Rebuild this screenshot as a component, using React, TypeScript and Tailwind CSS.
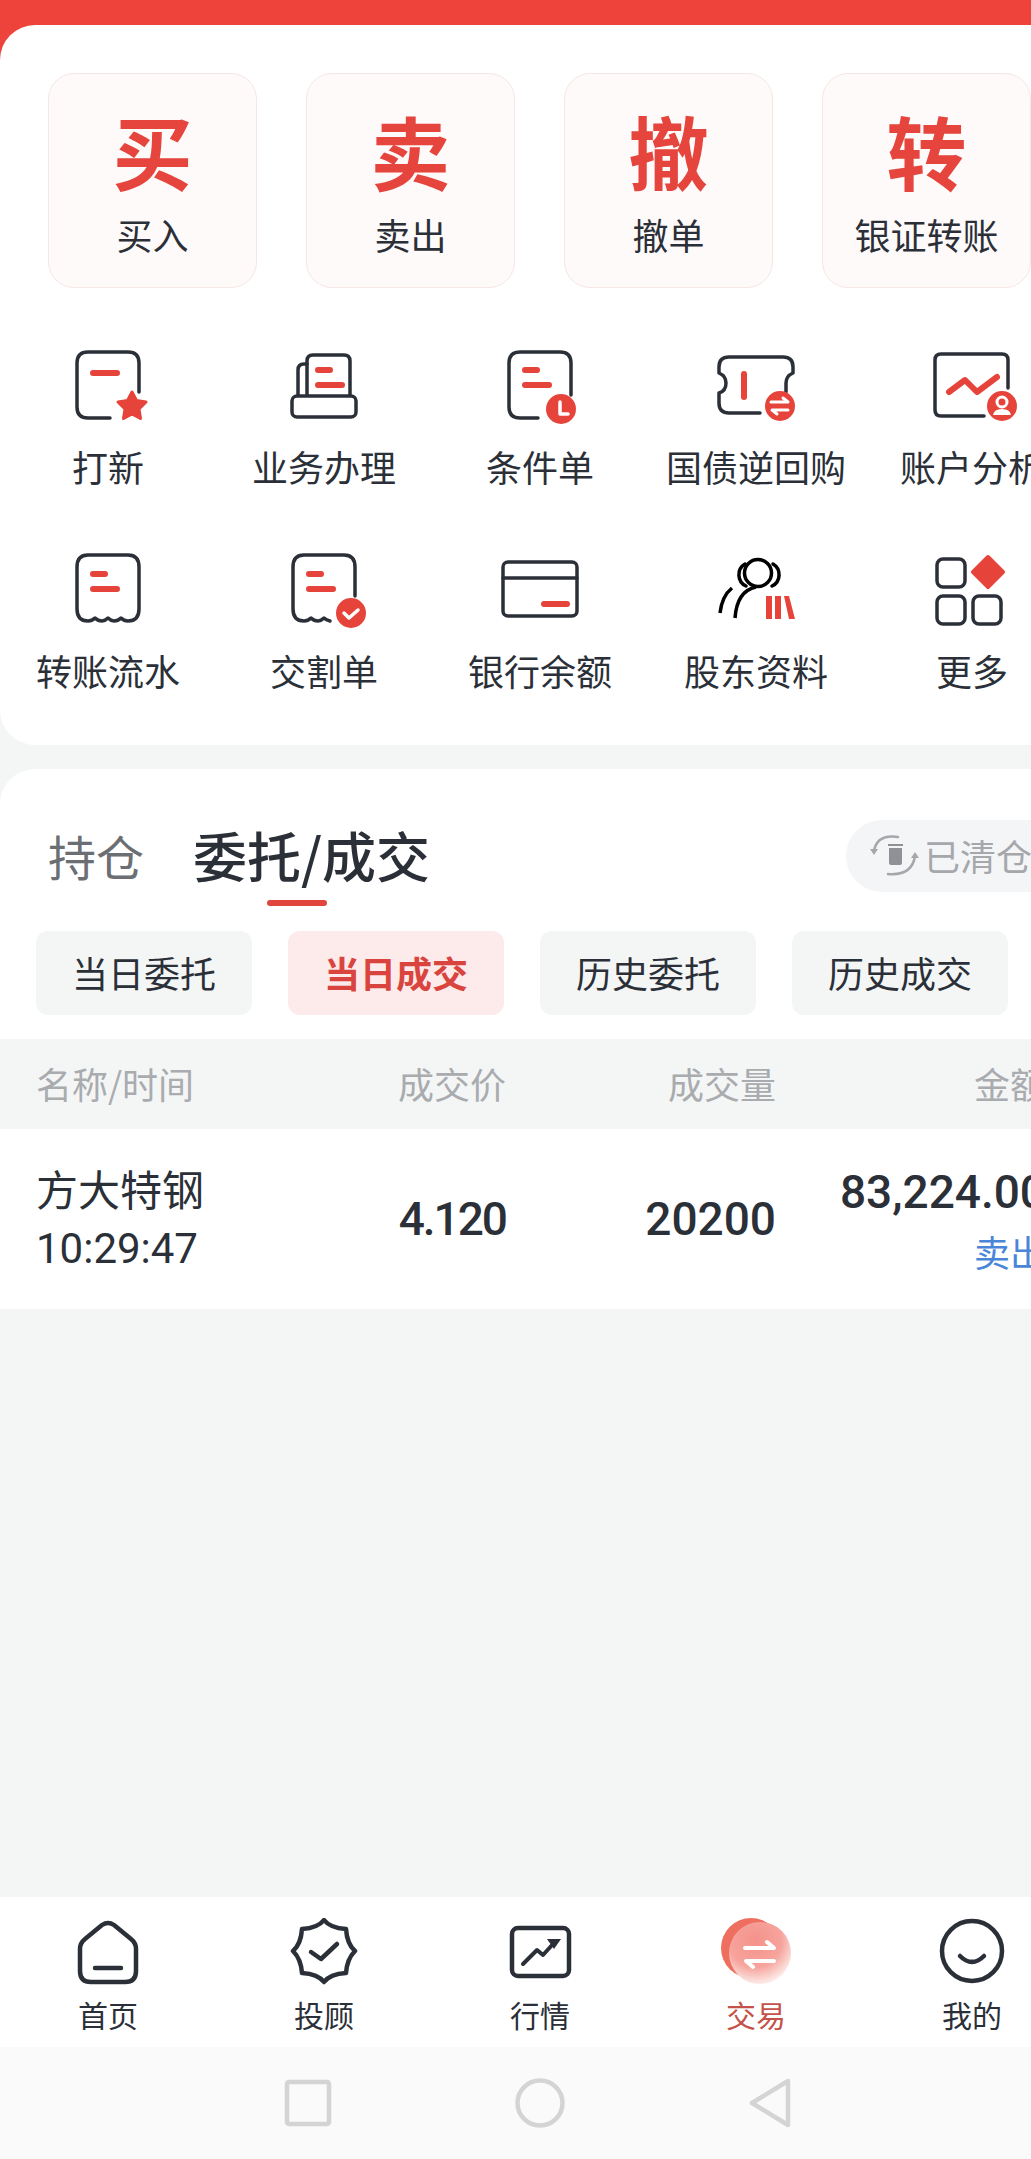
import React from 'react';

const INK = '#2b3038';
const RED = '#e6433b';

const quickActions = [
  { big: '买', label: '买入' },
  { big: '卖', label: '卖出' },
  { big: '撤', label: '撤单' },
  { big: '转', label: '银证转账' },
];

function Svg({ children }: { children: React.ReactNode }) {
  return (
    <svg width="120" height="90" viewBox="0 0 120 90" fill="none" strokeLinecap="round" strokeLinejoin="round">
      {children}
    </svg>
  );
}

function Outline({ d }: { d: string }) {
  return <path d={d} stroke={INK} strokeWidth="3.5" />;
}

function Bar({ d }: { d: string }) {
  return <path d={d} stroke={RED} strokeWidth="6" />;
}

const icons: Record<string, React.ReactNode> = {
  打新: (
    <Svg>
      <Outline d="M91 47V18Q91 7 80 7H40Q29 7 29 18V62Q29 73 40 73H62" />
      <Bar d="M45 28H69" />
      <path d="M84 47L88.5 55.5L98 57L91 64L92.5 73.5L84 69L75.5 73.5L77 64L70 57L79.5 55.5Z" fill={RED} stroke={RED} strokeWidth="3" />
    </Svg>
  ),
  业务办理: (
    <Svg>
      <Outline d="M43 50V16Q43 10 49 10H80Q86 10 86 16V50" />
      <Outline d="M43 19H40Q34 19 34 25V50" />
      <rect x="28" y="51" width="64" height="21" rx="5" stroke={INK} strokeWidth="3.5" />
      <Bar d="M54 25H66" />
      <Bar d="M54 40H78" />
    </Svg>
  ),
  条件单: (
    <Svg>
      <Outline d="M91 50V18Q91 7 80 7H40Q29 7 29 18V62Q29 73 40 73H58" />
      <Bar d="M45 25H57" />
      <Bar d="M45 40H69" />
      <circle cx="81" cy="64" r="15" fill={RED} />
      <path d="M80 57V69H88" stroke="#fff" strokeWidth="3.5" />
    </Svg>
  ),
  国债逆回购: (
    <Svg>
      <Outline d="M90 47V38Q90 31 97 28V22Q97 12 87 12H33Q23 12 23 22V28Q30 31 30 38Q30 46 23 48V58Q23 68 33 68H64" />
      <Bar d="M48 29V52" />
      <circle cx="84" cy="61" r="15" fill={RED} />
      <path d="M75 57H92L87 53M92 65H76L81 69" stroke="#fff" strokeWidth="3" />
    </Svg>
  ),
  账户分析: (
    <Svg>
      <Outline d="M96 43V15Q96 9 90 9H29Q23 9 23 15V65Q23 71 29 71H72" />
      <Bar d="M37 47L53 35L65 47L85 32" />
      <circle cx="90" cy="61" r="15" fill={RED} />
      <circle cx="90" cy="57" r="5" stroke="#fff" strokeWidth="3" />
      <path d="M81 70Q82 64 90 64Q98 64 99 70Z" fill="#fff" />
    </Svg>
  ),
  转账流水: (
    <Svg>
      <Outline d="M29 60V18Q29 6 40 6H80Q91 6 91 18V60Q91 72 80 72Q76 72 73 69Q70 72 66 72Q63 72 60 69Q57 72 54 72Q50 72 47 69Q44 72 40 72Q29 72 29 60Z" />
      <Bar d="M45 25H57" />
      <Bar d="M45 40H69" />
    </Svg>
  ),
  交割单: (
    <Svg>
      <Outline d="M91 47V18Q91 6 80 6H40Q29 6 29 18V60Q29 72 40 72Q44 72 47 69Q50 72 54 72Q57 72 60 69Q62 71 66 72" />
      <Bar d="M45 25H57" />
      <Bar d="M45 40H69" />
      <circle cx="87" cy="64" r="15" fill={RED} />
      <path d="M80 64L85 69L94 61" stroke="#fff" strokeWidth="3.5" />
    </Svg>
  ),
  银行余额: (
    <Svg>
      <rect x="23" y="13" width="74" height="54" rx="5" stroke={INK} strokeWidth="3.5" />
      <path d="M23 29H97" stroke={INK} strokeWidth="3.5" />
      <Bar d="M64 55H87" />
    </Svg>
  ),
  股东资料: (
    <Svg>
      <g stroke="#000" strokeWidth="3.5" fill="none">
        <circle cx="62" cy="24" r="13.5" />
        <path d="M49 15A12.5 12.5 0 0 0 50 37" />
        <path d="M77 15A12.5 12.5 0 0 1 76 37" />
        <path d="M60 38Q41 42 39 69" strokeLinecap="butt" />
        <path d="M36 39Q26 47 24 64" strokeLinecap="butt" />
      </g>
      <path d="M70 47H76V70H70ZM79 47H85V70H79ZM88 47H93L99 70H93Z" fill={RED} />
    </Svg>
  ),
  更多: (
    <Svg>
      <rect x="25" y="10" width="28" height="28" rx="6" stroke={INK} strokeWidth="3.5" />
      <rect x="25" y="47" width="28" height="28" rx="6" stroke={INK} strokeWidth="3.5" />
      <rect x="61" y="47" width="28" height="28" rx="6" stroke={INK} strokeWidth="3.5" />
      <path d="M76 8L91 23L76 38L61 23Z" fill={RED} stroke={RED} strokeWidth="4" />
    </Svg>
  ),
};

const gridRows = [
  ['打新', '业务办理', '条件单', '国债逆回购', '账户分析'],
  ['转账流水', '交割单', '银行余额', '股东资料', '更多'],
];

const filters = ['当日委托', '当日成交', '历史委托', '历史成交'];

function NavSvg({ children }: { children: React.ReactNode }) {
  return (
    <svg width="80" height="70" viewBox="0 0 80 70" fill="none" strokeLinecap="round" strokeLinejoin="round">
      {children}
    </svg>
  );
}

const navItems: { label: string; active?: boolean; icon: React.ReactNode }[] = [
  {
    label: '首页',
    icon: (
      <NavSvg>
        <path d="M34 7Q40 3 46 7L63 21Q68 25 68 31V53Q68 64 57 64H23Q12 64 12 53V31Q12 25 17 21Z" stroke={INK} strokeWidth="4.5" />
        <path d="M27 50H53" stroke={INK} strokeWidth="4.5" />
      </NavSvg>
    ),
  },
  {
    label: '投顾',
    icon: (
      <NavSvg>
        <path d="M40 2Q46 10 62 11Q63 26 71 33Q63 41 62 55Q46 56 40 64Q34 56 18 55Q17 41 9 33Q17 26 18 11Q34 10 40 2Z" stroke={INK} strokeWidth="4.5" />
        <path d="M27 34L37 41L53 26" stroke={INK} strokeWidth="4.5" />
      </NavSvg>
    ),
  },
  {
    label: '行情',
    icon: (
      <NavSvg>
        <rect x="12" y="10" width="57" height="48" rx="6" stroke={INK} strokeWidth="4.5" />
        <path d="M23 46L37 32L43 37L53 26" stroke={INK} strokeWidth="4" />
        <path d="M47 21H61L54 31Z" fill={INK} />
      </NavSvg>
    ),
  },
  {
    label: '交易',
    active: true,
    icon: (
      <NavSvg>
        <defs>
          <radialGradient id="tradeFade" cx="0.42" cy="0.3" r="0.72">
            <stop offset="0" stopColor="#f4928a" />
            <stop offset="0.6" stopColor="#f6a49d" />
            <stop offset="1" stopColor="#fdf0ee" />
          </radialGradient>
        </defs>
        <circle cx="35" cy="30" r="30" fill="#ee6f60" />
        <circle cx="44" cy="35" r="31" fill="url(#tradeFade)" />
        <path d="M29 30H58L51 24M58 43H30L37 49" stroke="#fff" strokeWidth="4" />
      </NavSvg>
    ),
  },
  {
    label: '我的',
    icon: (
      <NavSvg>
        <circle cx="40" cy="33" r="30" stroke={INK} strokeWidth="4.5" />
        <path d="M28 38Q40 50 52 38" stroke={INK} strokeWidth="4.5" />
      </NavSvg>
    ),
  },
];

export default function App() {
  return (
    <div
      className="w-[1031px] h-[2159px] overflow-hidden flex flex-col bg-[#f4f6f6] text-[#2b3038]"
      style={{ fontFamily: '"Noto Sans CJK SC", sans-serif' }}
    >
      {/* Red header strip, the white card sits over its lower part */}
      <div className="h-[60px] shrink-0 bg-[#ee433b]" />

      <div className="-mt-[35px] h-[720px] shrink-0 bg-white rounded-l-[35px] pt-[48px]">
        <div className="flex gap-[49px] pl-[48px]">
          {quickActions.map((a) => (
            <div
              key={a.big}
              className="w-[209px] h-[215px] shrink-0 rounded-[26px] border border-[#f5e7e4] bg-[#fffafa] flex flex-col items-center"
            >
              <div className="mt-[22px] h-[106px] flex items-center text-[80px] leading-none font-bold text-[#e6453e]">
                {a.big}
              </div>
              <div className="h-[48px] mt-[8px] flex items-center text-[36px] leading-none">{a.label}</div>
            </div>
          ))}
        </div>

        <div className="mt-[57px] flex flex-col gap-[59px]">
          {gridRows.map((row, i) => (
            <div key={i} className="flex">
              {row.map((name) => (
                <div key={name} className="w-[216px] shrink-0 flex flex-col items-center">
                  {icons[name]}
                  <div className="mt-[7px] h-[48px] flex items-center text-[36px] leading-none whitespace-nowrap">
                    {name}
                  </div>
                </div>
              ))}
            </div>
          ))}
        </div>
      </div>

      <div className="mt-[24px] h-[270px] shrink-0 bg-white rounded-tl-[35px] pt-[51px]">
        <div className="h-[72px] flex items-center pl-[48px]">
          <div className="pb-[3px] text-[48px] leading-none text-[#6b6e73]">持仓</div>
          <div className="pb-[3px] ml-[49px] text-[54px] leading-none font-medium">委托/成交</div>
          <div className="ml-auto -mr-[20px] w-[205px] h-[72px] shrink-0 rounded-l-[36px] bg-[#f4f5f6] flex items-center pl-[22px] text-[36px] leading-none text-[#a5a7ab]">
            <svg width="58" height="50" viewBox="0 0 58 50" fill="none" strokeLinecap="round" strokeLinejoin="round">
              <path d="M6 20Q9 3 30 6" stroke="#a5a7ab" strokeWidth="2.5" />
              <path d="M2 18H10L6 24Z" fill="#a5a7ab" />
              <path d="M47 25Q44 45 20 43" stroke="#a5a7ab" strokeWidth="2.5" />
              <path d="M43 27H51L47 21Z" fill="#a5a7ab" />
              <path d="M20 13H35V15H20ZM21 17H34V32Q34 34 32 34H23Q21 34 21 32Z" fill="#8f9196" />
            </svg>
            <span className="-ml-[2px] pb-[3px]">已清仓</span>
          </div>
        </div>
        <div className="mt-[8px] ml-[267px] w-[60px] h-[6px] rounded-full bg-[#e0453e]" />
        <div className="mt-[25px] flex gap-[36px] pl-[36px]">
          {filters.map((f) => (
            <div
              key={f}
              className={
                f === '当日成交'
                  ? 'w-[216px] h-[84px] pb-[2px] rounded-[12px] bg-[#fdeaea] text-[#d9453e] font-bold flex items-center justify-center text-[36px] leading-none'
                  : 'w-[216px] h-[84px] pb-[2px] rounded-[12px] bg-[#f4f6f6] flex items-center justify-center text-[36px] leading-none'
              }
            >
              {f}
            </div>
          ))}
        </div>
      </div>

      {/* Table head */}
      <div className="h-[90px] shrink-0 flex items-center pl-[36px] pb-[2px] text-[36px] leading-none text-[#a9abaf] whitespace-nowrap">
        <div className="w-[300px] shrink-0">名称/时间</div>
        <div className="w-[170px] shrink-0 text-right">成交价</div>
        <div className="w-[270px] shrink-0 text-right">成交量</div>
        <div className="w-[270px] shrink-0 text-right">金额</div>
      </div>

      {/* Table row */}
      <div className="h-[180px] shrink-0 bg-white flex items-center pl-[36px] whitespace-nowrap">
        <div className="w-[300px] shrink-0 flex flex-col gap-[19px] text-[42px] leading-[42px] pb-[2px]">
          <div>方大特钢</div>
          <div className="font-['Roboto']">10:29:47</div>
        </div>
        <div className="w-[170px] shrink-0 text-right font-['Roboto'] text-[46px] leading-none font-medium tracking-[-2px]">4.120</div>
        <div className="w-[270px] shrink-0 text-right font-['Roboto'] text-[46px] leading-none font-medium">20200</div>
        <div className="w-[270px] shrink-0 flex flex-col items-end gap-[18px]">
          <div className="font-['Roboto'] text-[46px] leading-[46px] font-medium">83,224.00</div>
          <div className="text-[36px] leading-[36px] text-[#4a86d8] mr-0">卖出</div>
        </div>
      </div>

      <div className="flex-1" />

      {/* Bottom tabs */}
      <div className="h-[150px] shrink-0 bg-white flex pt-[21px]">
        {navItems.map((n) => (
          <div key={n.label} className="w-[216px] shrink-0 flex flex-col items-center">
            {n.icon}
            <div
              className={
                n.active
                  ? 'mt-[6px] h-[40px] flex items-center text-[30px] leading-none text-[#c5524a]'
                  : 'mt-[6px] h-[40px] flex items-center text-[30px] leading-none'
              }
            >
              {n.label}
            </div>
          </div>
        ))}
      </div>

      {/* Android system bar */}
      <div className="h-[112px] shrink-0 bg-[#fafafa] flex items-center pl-[283px]">
        <svg width="50" height="50" viewBox="0 0 50 50" fill="none">
          <rect x="4" y="4" width="42" height="42" rx="2" stroke="#d4d4d4" strokeWidth="4.5" />
        </svg>
        <svg className="ml-[182px]" width="50" height="50" viewBox="0 0 50 50" fill="none">
          <circle cx="25" cy="25" r="22.5" stroke="#d4d4d4" strokeWidth="4.5" />
        </svg>
        <svg className="ml-[179px]" width="50" height="50" viewBox="0 0 50 50" fill="none">
          <path d="M44 3V47L8 25Z" stroke="#d4d4d4" strokeWidth="4.5" strokeLinejoin="round" />
        </svg>
      </div>
    </div>
  );
}
